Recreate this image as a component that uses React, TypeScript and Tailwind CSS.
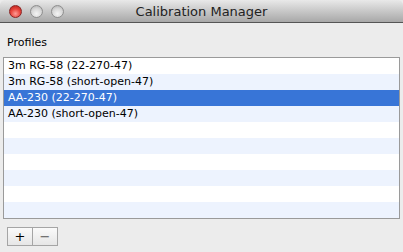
const rows = [
  '3m RG-58 (22-270-47)',
  '3m RG-58 (short-open-47)',
  'AA-230 (22-270-47)',
  'AA-230 (short-open-47)',
  '',
  '',
  '',
  '',
  '',
  '',
];

const font = { fontFamily: '"DejaVu Sans", "Liberation Sans", sans-serif' };

export default function App() {
  const selected = 2;

  return (
    <div className="w-[403px] h-[252px] bg-[#ececec] overflow-hidden text-black" style={font}>
      {/* title bar */}
      <div className="h-[23px] grid grid-cols-[1fr_auto_1fr] items-center rounded-t-[5px] bg-gradient-to-b from-[#e9e9e9] to-[#a8a8a8] border-b border-[#555]">
        <div className="flex items-center gap-[8px] pl-[9px]">
          <span className="w-[13px] h-[13px] rounded-full border border-[#8a2525] bg-[radial-gradient(circle_at_50%_70%,#ff9d96_0%,#e8453c_50%,#b01e16_100%)]" />
          <span className="w-[13px] h-[13px] rounded-full border border-[#8e8e8e] bg-[radial-gradient(circle_at_50%_70%,#f4f4f4_0%,#d6d6d6_55%,#a9a9a9_100%)]" />
          <span className="w-[13px] h-[13px] rounded-full border border-[#8e8e8e] bg-[radial-gradient(circle_at_50%_70%,#f4f4f4_0%,#d6d6d6_55%,#a9a9a9_100%)]" />
        </div>
        <div className="text-[13px] leading-none text-[#222] pt-[1px]">Calibration Manager</div>
        <div />
      </div>

      <div className="px-[3px]">
        <div className="pl-[4px] pt-[13px] h-[34px] text-[11px] leading-[13px]">Profiles</div>

        <div className="border border-[#9a9a9a] bg-white">
          {rows.map((name, i) => (
            <div
              key={i}
              className={
                'h-[16px] pl-[4px] text-[11px] leading-[16px] whitespace-nowrap ' +
                (i === selected ? 'bg-[#3875d7] text-white' : i % 2 === 1 ? 'bg-[#edf3fe]' : 'bg-white')
              }
            >
              {name}
            </div>
          ))}
        </div>

        <div className="pt-[8px] pl-[4px] flex">
          <button className="w-[26px] h-[19px] border border-[#a5a5a5] bg-gradient-to-b from-[#fafafa] to-[#e6e6e6] text-[13px] leading-none flex items-center justify-center">+</button>
          <button className="w-[25px] h-[19px] border border-l-0 border-[#a5a5a5] bg-gradient-to-b from-[#fafafa] to-[#e6e6e6] text-[13px] leading-none flex items-center justify-center text-[#555]">−</button>
        </div>
      </div>
    </div>
  );
}
